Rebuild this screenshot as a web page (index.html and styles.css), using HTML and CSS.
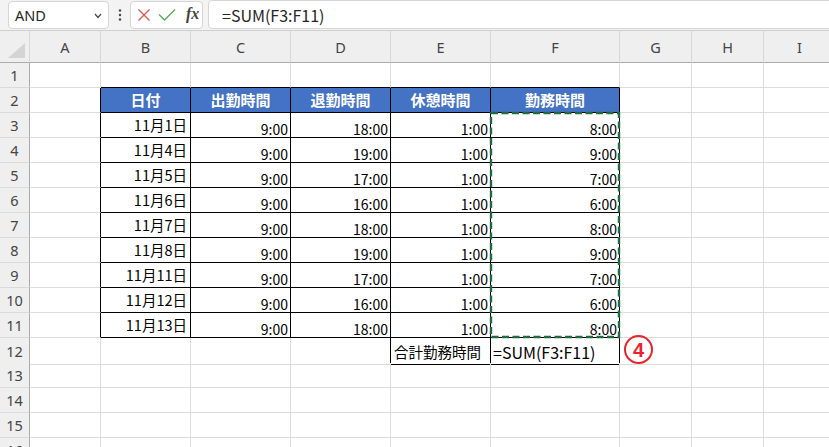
FILE: index.html
```html
<!DOCTYPE html>
<html lang="ja">
<head>
<meta charset="utf-8">
<link rel="stylesheet" href="styles.css">
</head>
<body>
<div class="toolbar">
  <div class="namebox">
    <span class="name">AND</span>
    <svg class="chev" width="8" height="6" viewBox="0 0 8 6"><polyline points="1,1 4,4.5 7,1" fill="none" stroke="#444" stroke-width="1.2"/></svg>
  </div>
  <div class="dots">
    <svg width="4" height="14" viewBox="0 0 4 14"><circle cx="2" cy="2.5" r="1.2" fill="#444"/><circle cx="2" cy="7" r="1.2" fill="#444"/><circle cx="2" cy="11.5" r="1.2" fill="#444"/></svg>
  </div>
  <div class="btnbox">
    <svg class="ico" width="14" height="14" viewBox="0 0 14 14"><path d="M1.5 1.5 L12.5 12.5 M12.5 1.5 L1.5 12.5" stroke="#e25656" stroke-width="1.4" fill="none"/></svg>
    <svg class="ico" width="18" height="14" viewBox="0 0 18 14"><polyline points="1,6.5 6.5,12 17,1.5" stroke="#5aaa5c" stroke-width="1.4" fill="none"/></svg>
    <span class="fx">fx</span>
  </div>
  <div class="formula">=SUM(F3:F11)</div>
</div>

<div class="sheet">
  <div class="row head">
    <div class="corner"><svg width="18" height="16" viewBox="0 0 18 16"><polygon points="17,0 17,15 0,15" fill="#d4d4d4"/></svg></div>
    <div class="ch">A</div><div class="ch">B</div><div class="ch">C</div><div class="ch">D</div><div class="ch">E</div><div class="ch">F</div><div class="ch">G</div><div class="ch">H</div><div class="ch">I</div>
  </div>

  <div class="row">
    <div class="rh">1</div><div class="c"></div><div class="c bb"></div><div class="c bb"></div><div class="c bb"></div><div class="c bb"></div><div class="c bb"></div><div class="c"></div><div class="c"></div><div class="c"></div>
  </div>

  <div class="row">
    <div class="rh">2</div><div class="c br"></div>
    <div class="c t th">日付</div><div class="c t th">出勤時間</div><div class="c t th">退勤時間</div><div class="c t th">休憩時間</div><div class="c t th">勤務時間</div>
    <div class="c"></div><div class="c"></div><div class="c"></div>
  </div>

  <div class="row">
    <div class="rh">3</div><div class="c br"></div>
    <div class="c t d">11月1日</div><div class="c t">9:00</div><div class="c t">18:00</div><div class="c t">1:00</div>
    <div class="c t sel">8:00<svg class="marquee" width="130" height="226" viewBox="0 0 130 226"><rect x="1" y="1" width="128" height="224" fill="none" stroke="#1f6b41" stroke-width="2.4" stroke-dasharray="7 3.5"/></svg></div>
    <div class="c"></div><div class="c"></div><div class="c"></div>
  </div>

  <div class="row">
    <div class="rh">4</div><div class="c br"></div>
    <div class="c t d">11月4日</div><div class="c t">9:00</div><div class="c t">19:00</div><div class="c t">1:00</div><div class="c t">9:00</div>
    <div class="c"></div><div class="c"></div><div class="c"></div>
  </div>

  <div class="row">
    <div class="rh">5</div><div class="c br"></div>
    <div class="c t d">11月5日</div><div class="c t">9:00</div><div class="c t">17:00</div><div class="c t">1:00</div><div class="c t">7:00</div>
    <div class="c"></div><div class="c"></div><div class="c"></div>
  </div>

  <div class="row">
    <div class="rh">6</div><div class="c br"></div>
    <div class="c t d">11月6日</div><div class="c t">9:00</div><div class="c t">16:00</div><div class="c t">1:00</div><div class="c t">6:00</div>
    <div class="c"></div><div class="c"></div><div class="c"></div>
  </div>

  <div class="row">
    <div class="rh">7</div><div class="c br"></div>
    <div class="c t d">11月7日</div><div class="c t">9:00</div><div class="c t">18:00</div><div class="c t">1:00</div><div class="c t">8:00</div>
    <div class="c"></div><div class="c"></div><div class="c"></div>
  </div>

  <div class="row">
    <div class="rh">8</div><div class="c br"></div>
    <div class="c t d">11月8日</div><div class="c t">9:00</div><div class="c t">19:00</div><div class="c t">1:00</div><div class="c t">9:00</div>
    <div class="c"></div><div class="c"></div><div class="c"></div>
  </div>

  <div class="row">
    <div class="rh">9</div><div class="c br"></div>
    <div class="c t d">11月11日</div><div class="c t">9:00</div><div class="c t">17:00</div><div class="c t">1:00</div><div class="c t">7:00</div>
    <div class="c"></div><div class="c"></div><div class="c"></div>
  </div>

  <div class="row">
    <div class="rh">10</div><div class="c br"></div>
    <div class="c t d">11月12日</div><div class="c t">9:00</div><div class="c t">16:00</div><div class="c t">1:00</div><div class="c t">6:00</div>
    <div class="c"></div><div class="c"></div><div class="c"></div>
  </div>

  <div class="row">
    <div class="rh">11</div><div class="c br"></div>
    <div class="c t d">11月13日</div><div class="c t">9:00</div><div class="c t">18:00</div><div class="c t">1:00</div><div class="c t">8:00</div>
    <div class="c"></div><div class="c"></div><div class="c"></div>
  </div>

  <div class="row">
    <div class="rh">12</div><div class="c"></div><div class="c"></div><div class="c"></div><div class="c br"></div>
    <div class="c t lbl">合計勤務時間</div><div class="c t fml">=SUM(F3:F11)</div>
    <div class="c note"><span class="circ">4</span></div><div class="c"></div><div class="c"></div>
  </div>

  <div class="row">
    <div class="rh">13</div><div class="c"></div><div class="c"></div><div class="c"></div><div class="c"></div><div class="c"></div><div class="c"></div><div class="c"></div><div class="c"></div><div class="c"></div>
  </div>
  <div class="row">
    <div class="rh">14</div><div class="c"></div><div class="c"></div><div class="c"></div><div class="c"></div><div class="c"></div><div class="c"></div><div class="c"></div><div class="c"></div><div class="c"></div>
  </div>
  <div class="row">
    <div class="rh">15</div><div class="c"></div><div class="c"></div><div class="c"></div><div class="c"></div><div class="c"></div><div class="c"></div><div class="c"></div><div class="c"></div><div class="c"></div>
  </div>
  <div class="row">
    <div class="rh">16</div><div class="c"></div><div class="c"></div><div class="c"></div><div class="c"></div><div class="c"></div><div class="c"></div><div class="c"></div><div class="c"></div><div class="c"></div>
  </div>
</div>
</body>
</html>
```

FILE: styles.css
```css
* { box-sizing: border-box; }

html, body {
  margin: 0;
  padding: 0;
  width: 829px;
  height: 447px;
  overflow: hidden;
  background: #ffffff;
  font-family: "Noto Sans CJK JP", "Noto Sans", sans-serif;
}

/* ---------- formula bar ---------- */
.toolbar {
  height: 30px;
  background: #f3f3f3;
  display: flex;
  align-items: flex-start;
  padding: 1px 0 0 8px;
}

.namebox {
  width: 101px;
  height: 28px;
  background: #fff;
  border: 1px solid #d6d6d6;
  border-radius: 4px;
  display: flex;
  align-items: center;
  justify-content: space-between;
  padding: 0 6px 0 6px;
}

.name {
  font-family: "Noto Sans", sans-serif;
  font-size: 14.5px;
  color: #262626;
}

.chev { margin-top: 2px; }

.dots {
  width: 21px;
  height: 28px;
  display: flex;
  align-items: center;
  justify-content: center;
}

.btnbox {
  width: 73px;
  height: 28px;
  background: #fff;
  border: 1px solid #d6d6d6;
  border-radius: 4px;
  display: flex;
  align-items: center;
  padding-left: 6px;
  gap: 7px;
}

.fx {
  font-family: "Liberation Serif", serif;
  font-style: italic;
  font-weight: bold;
  font-size: 16px;
  color: #444;
  margin-left: 3px;
  margin-top: -2px;
}

.formula {
  flex: 1;
  height: 29px;
  margin-top: -1px;
  margin-left: 5px;
  margin-right: -10px;
  background: #fff;
  border: 1px solid #d6d6d6;
  border-radius: 4px;
  padding-left: 13px;
  display: flex;
  align-items: center;
  font-size: 16px;
  color: #262626;
}

/* ---------- sheet ---------- */
.row {
  display: grid;
  grid-template-columns: 30px 71px 90px 100px 100px 100px 129px 72px 72px 72px;
  height: 25px;
}

.row.head {
  height: 33px;
  border-top: 1px solid #cfcfcf;
  background: #efefef;
}

.corner {
  border-right: 1px solid #d8d8d8;
  border-bottom: 1px solid #ababab;
  display: flex;
  align-items: flex-end;
  justify-content: flex-end;
  padding: 0 3px 3px 0;
}

.ch {
  border-right: 1px solid #d8d8d8;
  border-bottom: 1px solid #ababab;
  display: flex;
  align-items: center;
  justify-content: center;
  font-family: "Noto Sans", sans-serif;
  font-size: 14.5px;
  color: #444;
}

.rh {
  background: #efefef;
  border-right: 1px solid #ababab;
  border-bottom: 1px solid #dadada;
  display: flex;
  align-items: center;
  justify-content: center;
  font-family: "Noto Sans", sans-serif;
  font-size: 14.5px;
  color: #444;
}

.c {
  border-right: 1px solid #dcdcdc;
  border-bottom: 1px solid #dcdcdc;
  display: flex;
  align-items: flex-end;
  justify-content: flex-end;
  padding: 0 2px 1px 2px;
  font-size: 14px;
  line-height: 14px;
  color: #000;
  white-space: nowrap;
}

.c.bb { border-bottom-color: #000; }
.c.br { border-right-color: #000; }
.c.t { border-right-color: #000; border-bottom-color: #000; }

.c.th {
  background: #4472c4;
  color: #fff;
  font-weight: bold;
  font-size: 15px;
  justify-content: center;
  align-items: center;
  padding: 0;
}

.c.d {
  align-items: center;
  padding-right: 3px;
  padding-bottom: 0;
  font-size: 14.5px;
}

.c.sel { position: relative; }

.marquee {
  position: absolute;
  left: -1px;
  top: -1px;
  overflow: visible;
}

.c.lbl {
  justify-content: flex-start;
  align-items: center;
  padding: 2px 0 0 3px;
  font-size: 14.5px;
}

.c.fml {
  justify-content: flex-start;
  align-items: center;
  padding: 2px 0 0 2px;
  font-size: 16px;
}

.c.note {
  justify-content: flex-start;
  align-items: center;
  padding: 0 0 0 4px;
  overflow: visible;
}

.circ {
  width: 29px;
  height: 29px;
  flex: none;
  border: 2px solid #e8232b;
  border-radius: 50%;
  display: flex;
  align-items: center;
  justify-content: center;
  font-family: "Liberation Sans", sans-serif;
  font-weight: bold;
  font-size: 20px;
  line-height: 1;
  color: #e8232b;
  margin-top: -3px;
}
```
